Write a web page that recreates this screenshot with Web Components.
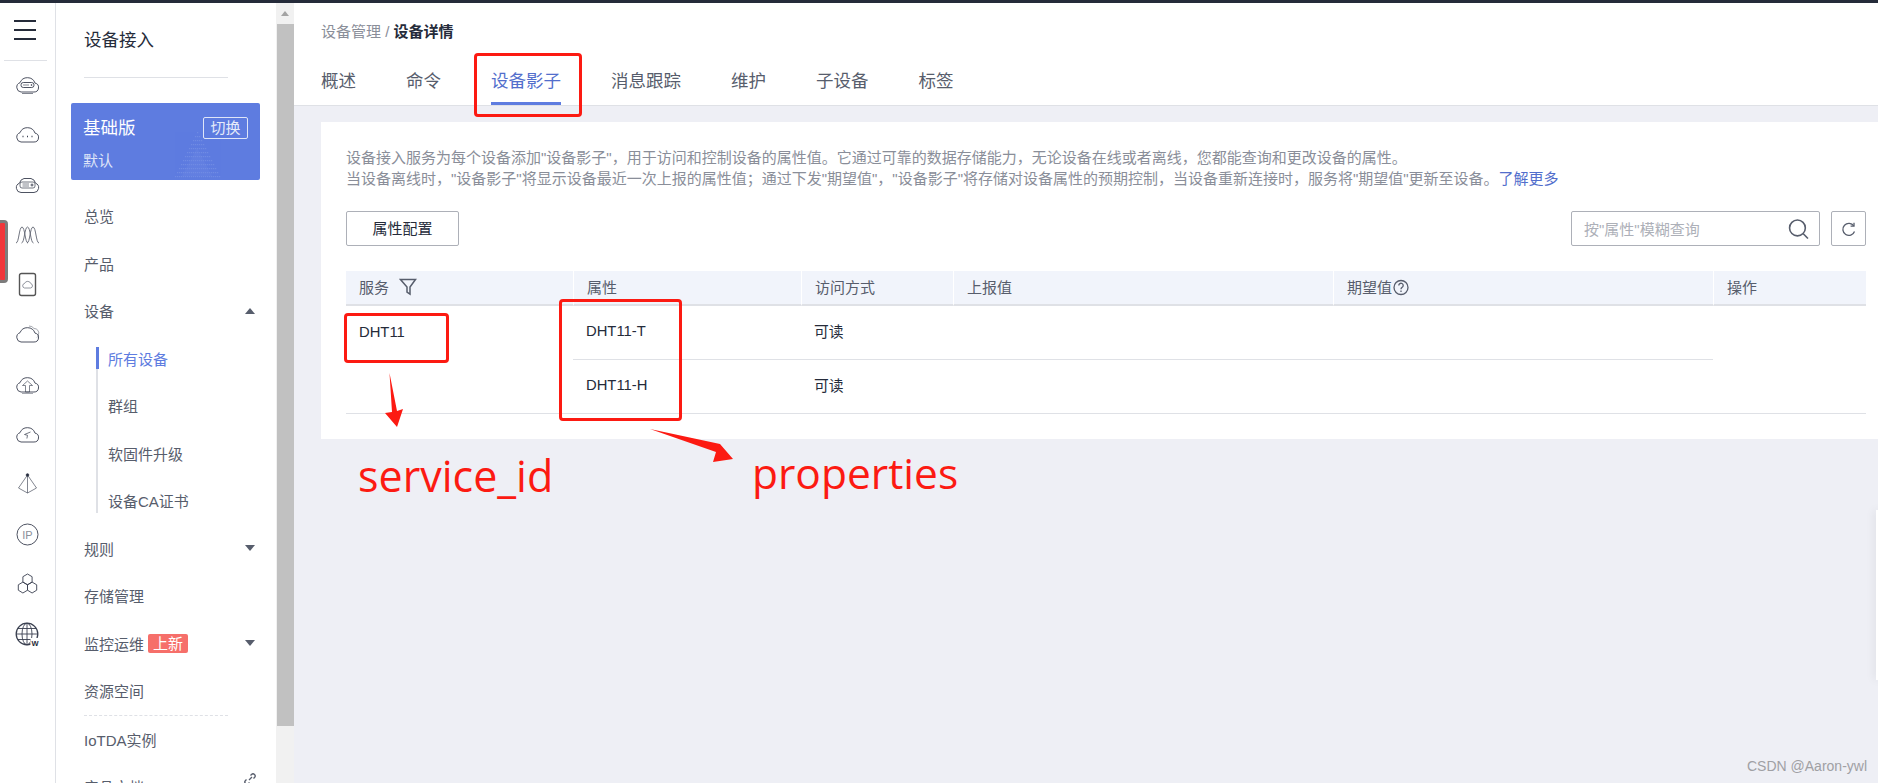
<!DOCTYPE html>
<html lang="zh">
<head>
<meta charset="utf-8">
<title>设备详情</title>
<style>
  html, body { margin: 0; height: 783px; overflow: hidden; background: #fff; }
  body { font-family: "Liberation Sans", "Noto Sans CJK SC", sans-serif; color: #252b3a; }
</style>
</head>
<body>
<iot-app></iot-app>

<script>
const cloud = "M6 20h13a4.500 4.500 0 0 0 1-8.900 8 8 0 0 0-15-.4A4.800 4.800 0 0 0 6 20z";

const railIcons = [
  `<path d="${cloud}"/><rect x="6" y="10.500" width="13" height="5" rx="2.300"/><path d="M8 13h6M7 21.500h11" opacity=".7"/><circle cx="16.500" cy="13" r=".5"/>`,
  `<path d="${cloud}"/><path d="M7.500 14.500h1M12 14.500h1M16.500 14.500h1" stroke-width="1.600"/>`,
  `<path d="M6 20.500h13a4.800 4.800 0 0 0 1.500-9.300A6 6 0 0 0 16 6.500H9a6 6 0 0 0-4.500 4.700A4.800 4.800 0 0 0 6 20.500z"/><rect x="5" y="10" width="15" height="6" rx="2" opacity=".8"/><path d="M7.500 12h6.500M7.500 14h6.500" opacity=".7"/><circle cx="17" cy="13" r="1"/>`,
  `<g opacity=".8"><path d="M1 21c3 0 3-16 6-16s3 16 6 16"/><path d="M6.500 21c3 0 3-16 6-16s3 16 6 16"/><path d="M12 21c3 0 3-16 6-16s3 16 6 16"/></g>`,
  `<rect x="4.500" y="1.500" width="16" height="22" rx="2" stroke-width="1.400" stroke="#555"/><path d="M9.500 16h6a2.200 2.200 0 0 0 .4-4.300 3.400 3.400 0 0 0-6.400-.2A2.300 2.300 0 0 0 9.500 16z" opacity=".6"/>`,
  `<path d="${cloud}"/><path d="M14 4a6 6 0 0 1 5 2.500 4.500 4.500 0 0 1 4.500 6 4 4 0 0 1-1.500 3" opacity=".5"/>`,
  `<path d="${cloud}"/><path d="M12.500 9l-5 4.500h3v6.500h4v-6.500h3z" opacity=".7"/><path d="M7 21.500h11" opacity=".5"/>`,
  `<path d="${cloud}"/><path d="M15.500 10L9.500 12.500l3 .8-.6 3.200" opacity=".8"/>`,
  `<path d="M12.500 3L3.500 16l9 5 9-5zM12.500 3v18" opacity=".7"/><circle cx="12.500" cy="3" r="1.300" fill="#252b3a"/>`,
  `<circle cx="12.500" cy="12.500" r="10.500"/><text x="12.500" y="16.500" text-anchor="middle" font-size="11" font-family="Liberation Sans" fill="#8a8e99" stroke="none">IP</text>`,
  `<path d="M12.500 2l4.600 2.700v5.400l-4.600 2.700-4.600-2.700V4.700zM7.900 10.100l4.600 2.700v5.400L7.900 21l-4.600-2.800v-5.400zM17.100 10.100l4.600 2.700v5.400L17.100 21l-4.600-2.800v-5.400z"/>`,
  `<circle cx="12" cy="12" r="10.800" stroke-width="1.300"/><ellipse cx="12" cy="12" rx="5" ry="10.800"/><path d="M1.500 12h21M3 6.500h18M3 17.500h18M12 1.500v21"/><rect x="15.500" y="16" width="9" height="8" fill="#fff" stroke="none"/><text x="20" y="23.500" text-anchor="middle" font-size="7.500" font-weight="700" font-family="Liberation Sans" fill="#252b3a" stroke="none">W</text>`,
];

class IotRail extends HTMLElement {
  connectedCallback() {
    const root = this.attachShadow({ mode: "open" });
    root.innerHTML = `
    <style>
      :host { display: block; flex: none; width: 55px; height: 100%; border-right: 1px solid #dfe1e6; position: relative; background: #fff; }
      .burger { display: flex; flex-direction: column; justify-content: space-between; width: 22px; height: 20px; margin: 17px 0 0 14px; }
      .burger i { display: block; height: 2px; background: #252b3a; }
      hr { border: 0; border-top: 1px solid #dfe1e6; margin: 20px 8px 0 4px; }
      .icons { display: flex; flex-direction: column; align-items: center; margin-top: -2px; padding-right: 1px; }
      .icons div { height: 50px; display: flex; align-items: center; justify-content: center; }
      svg { width: 25px; height: 25px; fill: none; stroke: #3a4050; stroke-width: .9; }
      .mark { position: absolute; left: -3px; top: 217px; width: 5px; height: 57px; border: 3px solid #7c7c7c; border-radius: 4px; background: #f0353a; }
    </style>
    <div class="burger"><i></i><i></i><i></i></div>
    <hr>
    <div class="icons">
      ${railIcons.map((icon) => `<div><svg viewBox="0 0 25 25">${icon}</svg></div>`).join("")}
    </div>
    <div class="mark"></div>
`;
  }
}

class NavItem extends HTMLElement {
  connectedCallback() {
    const root = this.attachShadow({ mode: "open" });
    const caret = this.getAttribute("caret");
    root.innerHTML = `
    <style>
      :host { display: flex; align-items: center; height: 47.5px; font-size: 15px; color: #575d6c; padding: 0 21px 0 28px; position: relative; white-space: nowrap; }
      :host([sub]) { padding-left: 52px; }
      :host([active]) { color: #5e7ce0; }
      .caret { margin-left: auto; width: 0; height: 0; border-left: 5px solid transparent; border-right: 5px solid transparent; }
      .up { border-bottom: 6px solid #575d6c; }
      .down { border-top: 6px solid #575d6c; }
      ::slotted(b) { font-weight: normal; font-size: 15px; color: #fff; background: #f66f6a; border-radius: 2px; padding: 0 5px; margin-left: 4px; line-height: 19px; }
    </style>
    <slot></slot>
    ${caret ? `<span class="caret ${caret}"></span>` : ""}
`;
  }
}

class PlanCard extends HTMLElement {
  connectedCallback() {
    const root = this.attachShadow({ mode: "open" });
    let dots = "";
    for (let r = 0; r < 12; r++) {
      for (let c = -r; c <= r; c++) {
        dots += `<rect x="${25 + c * 2}" y="${2 + r * 4}" width="1.200" height="1.200"/>`;
      }
    }
    root.innerHTML = `
    <style>
      :host { display: block; position: relative; width: 189px; height: 77px; margin: 25px 0 12px 15px; background: #5e7ce0; border-radius: 2px; color: #fff; overflow: hidden; }
      .top { display: flex; justify-content: space-between; align-items: center; padding: 13px 12px 0 12px; }
      .name { font-size: 17.500px; line-height: 22px; padding-top: 1px; }
      .switch { font-size: 15px; line-height: 20px; width: 43px; text-align: center; border: 1px solid #dfe5f8; border-radius: 2px; color: #e6ebfa; }
      .sub { font-size: 15px; line-height: 20px; margin: 12px 0 0 12px; color: #dfe5f8; }
      svg { position: absolute; left: 101px; top: 27px; width: 50px; height: 50px; fill: #8ba2ea; opacity: .4; }
    </style>
    <svg viewBox="0 0 50 50">${dots}<path d="M25 18L40 46H10z" opacity=".25"/></svg>
    <div class="top"><span class="name">基础版</span><span class="switch">切换</span></div>
    <div class="sub">默认</div>
`;
  }
}

class IotSidebar extends HTMLElement {
  connectedCallback() {
    const root = this.attachShadow({ mode: "open" });
    root.innerHTML = `
    <style>
      :host { display: block; flex: none; width: 220px; height: 100%; overflow: hidden; background: #fff; }
      h1 { font-weight: normal; font-size: 17.500px; color: #252b3a; line-height: 24px; margin: 0 48px 0 28px; padding: 25px 0 25px; border-bottom: 1px solid #dfe1e6; }
      .sub { position: relative; }
      .sub::before { content: ""; position: absolute; left: 40px; top: 12px; bottom: 12px; width: 2px; background: #dfe1e6; }
      .sub::after { content: ""; position: absolute; left: 40px; top: 12px; height: 22px; width: 3px; background: #5e7ce0; }
      .dash { border-top: 1px dashed #dfe1e6; margin: 0 48px 0 28px; }
      .link { position: relative; }
      .link svg { position: absolute; right: 20px; top: 10px; width: 12px; height: 12px; fill: none; stroke: #575d6c; stroke-width: 1.300; }
    </style>
    <h1>设备接入</h1>
    <plan-card></plan-card>
    <nav-item>总览</nav-item>
    <nav-item>产品</nav-item>
    <nav-item caret="up">设备</nav-item>
    <div class="sub">
      <nav-item sub active>所有设备</nav-item>
      <nav-item sub>群组</nav-item>
      <nav-item sub>软固件升级</nav-item>
      <nav-item sub>设备CA证书</nav-item>
    </div>
    <nav-item caret="down">规则</nav-item>
    <nav-item>存储管理</nav-item>
    <nav-item caret="down">监控运维<b>上新</b></nav-item>
    <nav-item>资源空间</nav-item>
    <div class="dash"></div>
    <nav-item>IoTDA实例</nav-item>
    <div class="link">
      <nav-item>产品文档</nav-item>
      <svg viewBox="0 0 12 12"><path d="M5 7l3-3M6.500 2.500l1-1a2 2 0 0 1 3 3l-1 1M5.500 9.500l-1 1a2 2 0 0 1-3-3l1-1"/></svg>
    </div>
`;
  }
}

class FakeScrollbar extends HTMLElement {
  connectedCallback() {
    const root = this.attachShadow({ mode: "open" });
    root.innerHTML = `
    <style>
      :host { display: flex; flex-direction: column; flex: none; width: 18px; height: 100%; background: #f1f1f1; }
      .arrow { flex: none; height: 21px; display: flex; align-items: center; justify-content: center; }
      .arrow i { width: 0; height: 0; border-left: 4.500px solid transparent; border-right: 4.500px solid transparent; border-bottom: 5px solid #a3a3a3; }
      .thumb { height: 702px; margin-left: 1px; background: #c1c1c1; }
    </style>
    <div class="arrow"><i></i></div>
    <div class="thumb"></div>
`;
  }
}

class DeviceTabs extends HTMLElement {
  connectedCallback() {
    const root = this.attachShadow({ mode: "open" });
    const tabs = ["概述", "命令", "设备影子", "消息跟踪", "维护", "子设备", "标签"];
    const active = this.getAttribute("active");
    root.innerHTML = `
    <style>
      :host { display: block; height: 102px; background: #fff; border-bottom: 1px solid #dfe1e6; padding-left: 27px; }
      .crumb { font-size: 15px; line-height: 20px; padding-top: 19px; color: #8a8e99; }
      .crumb b { color: #252b3a; }
      .tabs { display: flex; gap: 50px; margin-top: 12px; }
      .tab { font-size: 17.500px; line-height: 24px; height: 51px; padding-top: 15px; box-sizing: border-box; color: #575d6c; border-bottom: 3px solid transparent; }
      .tab.on { color: #526ecc; border-bottom-color: #5e7ce0; }
    </style>
    <div class="crumb">设备管理 / <b>设备详情</b></div>
    <div class="tabs">
      ${tabs.map((t) => `<div class="tab ${t === active ? "on" : ""}">${t}</div>`).join("")}
    </div>
`;
  }
}

class ToolBar extends HTMLElement {
  connectedCallback() {
    const root = this.attachShadow({ mode: "open" });
    root.innerHTML = `
    <style>
      :host { display: flex; align-items: center; height: 35px; }
      .btn { width: 113px; height: 35px; box-sizing: border-box; border: 1px solid #adb0b8; border-radius: 2px; font-size: 15px; line-height: 33px; text-align: center; color: #252b3a; }
      .search { margin-left: auto; width: 249px; height: 35px; box-sizing: border-box; border: 1px solid #adb0b8; border-radius: 2px; display: flex; align-items: center; padding: 0 10px 0 12px; font-size: 15px; color: #adb0b8; justify-content: space-between; }
      .refresh { margin-left: 11px; width: 35px; height: 35px; box-sizing: border-box; border: 1px solid #adb0b8; border-radius: 2px; display: flex; align-items: center; justify-content: center; }
      svg { fill: none; stroke: #575d6c; }
    </style>
    <div class="btn">属性配置</div>
    <div class="search">
      <span>按"属性"模糊查询</span>
      <svg width="21" height="20" viewBox="0 0 19 19" stroke-width="1.500"><circle cx="8.500" cy="8.500" r="7.500"/><path d="M14 14l4.500 4.500"/></svg>
    </div>
    <div class="refresh">
      <svg width="16" height="16" viewBox="0 0 16 16" stroke-width="1.300" stroke="#252b3a"><path d="M12.800 5A6 6 0 1 0 13.500 10.500"/><path d="M13 1.800V5.200H9.600"/></svg>
    </div>
`;
  }
}

class ShadowTable extends HTMLElement {
  connectedCallback() {
    const root = this.attachShadow({ mode: "open" });
    root.innerHTML = `
    <style>
      :host { display: block; margin-top: 25px; }
      table { border-collapse: separate; border-spacing: 0; table-layout: fixed; width: 1520px; font-size: 15px; }
      th { height: 31px; background: #f1f4fb; font-weight: normal; text-align: left; padding: 0 13px 2px; color: #575d6c; border-bottom: 2px solid #dfe1e6; border-left: 1px solid #fff; }
      th:first-child { border-left: 0; }
      td { height: 50px; padding: 0 13px 3px; color: #252b3a; border-bottom: 1px solid #dfe1e6; font-size: 14.800px; }
      td.rw { height: 48px; padding-bottom: 5px; }
      td.svc { vertical-align: top; padding-top: 16px; line-height: 20px; }
      .q { vertical-align: -3px; margin-left: 1px; }
      .f { vertical-align: -3px; margin-left: 10px; }
      svg { fill: none; stroke: #575d6c; }
    </style>
    <table>
      <colgroup><col style="width:227px"><col style="width:228px"><col style="width:152px"><col style="width:380px"><col style="width:380px"><col style="width:153px"></colgroup>
      <thead>
        <tr>
          <th>服务<svg class="f" width="18" height="18" viewBox="0 0 18 18" stroke-width="1.500"><path d="M1.500 1.500h15L11 9v7l-3-2V9z"/></svg></th>
          <th>属性</th>
          <th>访问方式</th>
          <th>上报值</th>
          <th>期望值<svg class="q" width="16" height="17" viewBox="0 0 16 17" stroke-width="1.300"><circle cx="8" cy="8.500" r="7"/><path d="M5.800 6.500a2.200 2.200 0 1 1 3.400 1.800c-.8.500-1.200 1-1.200 2"/><path d="M8 11.500v1.400"/></svg></th>
          <th>操作</th>
        </tr>
      </thead>
      <tbody>
        <tr>
          <td class="svc" rowspan="2">DHT11</td>
          <td>DHT11-T</td><td class="rw">可读</td><td></td><td></td>
          <td rowspan="2"></td>
        </tr>
        <tr>
          <td>DHT11-H</td><td class="rw">可读</td><td></td><td></td>
        </tr>
      </tbody>
    </table>
`;
  }
}

class RedBox extends HTMLElement {
  connectedCallback() {
    const root = this.attachShadow({ mode: "open" });
    root.innerHTML = `
    <style>
      :host { display: block; position: absolute; box-sizing: border-box; border: 3px solid #fc1a12; border-radius: 4px; pointer-events: none; }
    </style>
`;
  }
}

class RedNote extends HTMLElement {
  connectedCallback() {
    const root = this.attachShadow({ mode: "open" });
    root.innerHTML = `
    <style>
      :host { display: block; position: absolute; font-family: "Open Sans", "Noto Sans", sans-serif; font-size: 43px; line-height: 50px; color: #fc1a12; white-space: nowrap; }
    </style>
    <slot></slot>
`;
  }
}

class IotApp extends HTMLElement {
  connectedCallback() {
    const root = this.attachShadow({ mode: "open" });
    root.innerHTML = `
    <style>
      :host { display: block; position: relative; width: 1878px; height: 783px; overflow: hidden; background: #eeeff5; }
      .bar { height: 3px; background: #252b3a; }
      .shell { display: flex; height: 780px; }
      main { flex: 1; min-width: 0; }
      .card { margin: 16px 0 0 27px; height: 317px; background: #fff; box-sizing: border-box; padding: 25px 12px 0 25px; }
      .desc { font-size: 15px; line-height: 21px; color: #8a8e99; margin: 0 0 22px; white-space: nowrap; }
      .desc a { color: #526ecc; }
      .arrows { position: absolute; left: 0; top: 0; width: 1878px; height: 783px; pointer-events: none; fill: #fc1a12; }
      .peek { position: absolute; left: 1876px; top: 510px; width: 2px; height: 170px; background: #fff; box-shadow: 0 0 10px rgba(0,0,0,.2); }
      .mark { position: absolute; left: 1747px; top: 757px; font-size: 14px; line-height: 18px; color: #a0a0a4; white-space: nowrap; }
    </style>
    <div class="bar"></div>
    <div class="shell">
      <iot-rail></iot-rail>
      <iot-sidebar></iot-sidebar>
      <fake-scrollbar></fake-scrollbar>
      <main>
        <device-tabs active="设备影子"></device-tabs>
        <div class="card">
          <p class="desc">设备接入服务为每个设备添加"设备影子"，用于访问和控制设备的属性值。它通过可靠的数据存储能力，无论设备在线或者离线，您都能查询和更改设备的属性。<br>当设备离线时，"设备影子"将显示设备最近一次上报的属性值；通过下发"期望值"，"设备影子"将存储对设备属性的预期控制，当设备重新连接时，服务将"期望值"更新至设备。<a>了解更多</a></p>
          <tool-bar></tool-bar>
          <shadow-table></shadow-table>
        </div>
      </main>
    </div>
    <div class="peek"></div>
    <div class="mark">CSDN @Aaron-ywl</div>
    <red-box style="left:474px;top:53px;width:108px;height:64px"></red-box>
    <red-box style="left:344px;top:313px;width:105px;height:50px"></red-box>
    <red-box style="left:559px;top:299px;width:123px;height:122px"></red-box>
    <svg class="arrows" viewBox="0 0 1878 783">
      <polygon points="389.500,373 397,411 403,409 397,427 385,413 392,412"/>
      <polygon points="650,429 720,444 733,459 713,462 716,452"/>
    </svg>
    <red-note style="left:358px;top:451px">service_id</red-note>
    <red-note style="left:752px;top:448px;font-size:42.500px">properties</red-note>
`;
  }
}

window.customElements.define("iot-rail", IotRail);
window.customElements.define("nav-item", NavItem);
window.customElements.define("plan-card", PlanCard);
window.customElements.define("iot-sidebar", IotSidebar);
window.customElements.define("fake-scrollbar", FakeScrollbar);
window.customElements.define("device-tabs", DeviceTabs);
window.customElements.define("tool-bar", ToolBar);
window.customElements.define("shadow-table", ShadowTable);
window.customElements.define("red-box", RedBox);
window.customElements.define("red-note", RedNote);
window.customElements.define("iot-app", IotApp);
</script>
</body>
</html>
